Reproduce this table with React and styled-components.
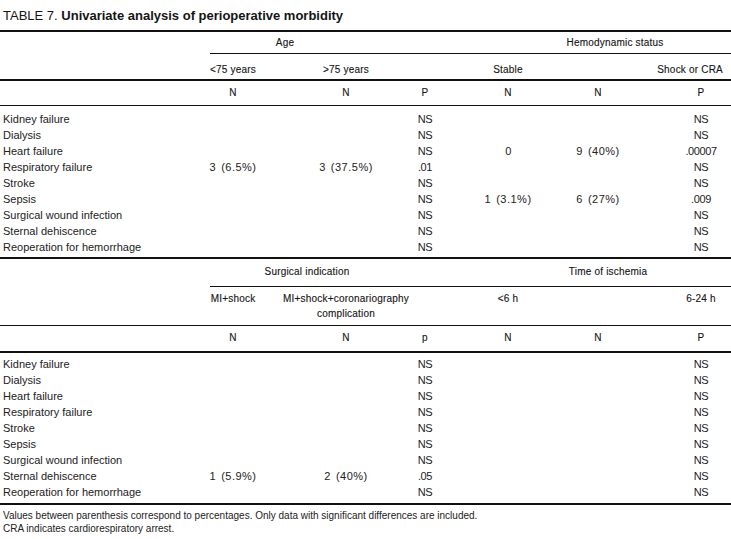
import React from "react";
import styled, { createGlobalStyle } from "styled-components";

const COLS = "133px 200px 26px 132px 34px 146px 60px";

const GlobalStyle = createGlobalStyle`
  html, body {
    margin: 0;
    padding: 0;
    background: #fff;
  }
  body {
    font-family: "Liberation Sans", Arial, sans-serif;
    color: #151515;
  }
`;

const Page = styled.div`
  width: 731px;
`;

const Title = styled.h1`
  margin: 0 0 6px;
  padding: 8px 3px 0;
  font-size: 13px;
  line-height: 16px;
  font-weight: normal;
  white-space: nowrap;
  b {
    font-weight: bold;
  }
`;

const GroupRow = styled.div`
  display: flex;
  padding-left: 210px;
  border-top: ${(p) => (p.$top ? "2px solid #111" : "none")};
`;

const GroupBand = styled.div`
  flex: 1;
  display: grid;
  grid-template-columns: ${(p) => p.$cols};
  padding: ${(p) => p.$pad};
  border-bottom: 1px solid #111;
  font-size: 10px;
  line-height: 12px;
  -webkit-text-stroke: 0.12px currentColor;
  letter-spacing: 0.2px;
`;

const GroupLabel = styled.div`
  grid-column: ${(p) => p.$col};
  text-align: center;
  white-space: nowrap;
`;

const HeadRow = styled.div`
  display: grid;
  grid-template-columns: ${COLS};
  padding: ${(p) => p.$pad};
  border-bottom: ${(p) => p.$line}px solid #111;
  font-size: 10px;
  line-height: ${(p) => p.$lh || 12}px;
  -webkit-text-stroke: 0.12px currentColor;
  letter-spacing: 0.2px;
`;

const Body = styled.div`
  display: grid;
  grid-template-columns: ${COLS};
  grid-auto-rows: 16px;
  padding: ${(p) => p.$pad};
  border-bottom: 2px solid #111;
  font-size: 11px;
  line-height: 16px;
  color: #222;
`;

const Cell = styled.div`
  display: flex;
  justify-content: ${(p) =>
    p.$align === "left" ? "flex-start" : p.$align === "right" ? "flex-end" : "center"};
  padding-left: ${(p) => (p.$align === "left" ? "3px" : "0")};
  padding-right: ${(p) => p.$pr || 0}px;
  white-space: nowrap;
  text-align: center;
`;

const Value = styled.span`
  letter-spacing: ${(p) => (p.$wide ? "0.5px" : "-0.4px")};
  word-spacing: ${(p) => (p.$wide ? "1.5px" : "0")};
`;

const Notes = styled.div`
  padding: 4px 3px 0;
  font-size: 10px;
  line-height: 13px;
  color: #222;
`;

const table1 = [
  ["Kidney failure", "", "", "NS", "", "", "NS"],
  ["Dialysis", "", "", "NS", "", "", "NS"],
  ["Heart failure", "", "", "NS", "0", "9 (40%)", ".00007"],
  ["Respiratory failure", "3 (6.5%)", "3 (37.5%)", ".01", "", "", "NS"],
  ["Stroke", "", "", "NS", "", "", "NS"],
  ["Sepsis", "", "", "NS", "1 (3.1%)", "6 (27%)", ".009"],
  ["Surgical wound infection", "", "", "NS", "", "", "NS"],
  ["Sternal dehiscence", "", "", "NS", "", "", "NS"],
  ["Reoperation for hemorrhage", "", "", "NS", "", "", "NS"],
];

const table2 = [
  ["Kidney failure", "", "", "NS", "", "", "NS"],
  ["Dialysis", "", "", "NS", "", "", "NS"],
  ["Heart failure", "", "", "NS", "", "", "NS"],
  ["Respiratory failure", "", "", "NS", "", "", "NS"],
  ["Stroke", "", "", "NS", "", "", "NS"],
  ["Sepsis", "", "", "NS", "", "", "NS"],
  ["Surgical wound infection", "", "", "NS", "", "", "NS"],
  ["Sternal dehiscence", "1 (5.9%)", "2 (40%)", ".05", "", "", "NS"],
  ["Reoperation for hemorrhage", "", "", "NS", "", "", "NS"],
];

const BodyRows = ({ rows, pad }) => (
  <Body $pad={pad}>
    {rows.map((row, i) =>
      row.map((v, j) => (
        <Cell key={`${i}-${j}`} $align={j === 0 ? "left" : "center"}>
          {j === 0 ? v : <Value $wide={v.includes("(")}>{v}</Value>}
        </Cell>
      ))
    )}
  </Body>
);

const NRow = ({ p, pad, line }) => (
  <HeadRow $pad={pad} $line={line}>
    <Cell />
    <Cell>N</Cell>
    <Cell>N</Cell>
    <Cell>{p}</Cell>
    <Cell>N</Cell>
    <Cell>N</Cell>
    <Cell>P</Cell>
  </HeadRow>
);

export default function App() {
  return (
    <Page>
      <GlobalStyle />
      <Title>
        TABLE 7. <b>Univariate analysis of perioperative morbidity</b>
      </Title>

      <GroupRow $top>
        <GroupBand $cols="150px 139px 1fr" $pad="5px 0 4px">
          <GroupLabel $col={1}>Age</GroupLabel>
          <GroupLabel $col={3}>Hemodynamic status</GroupLabel>
        </GroupBand>
      </GroupRow>
      <HeadRow $pad="10px 0 3px" $line={2}>
        <Cell />
        <Cell>&lt;75 years</Cell>
        <Cell>&gt;75 years</Cell>
        <Cell />
        <Cell>Stable</Cell>
        <Cell />
        <Cell $align="right" $pr={8}>
          Shock or CRA
        </Cell>
      </HeadRow>
      <NRow p="P" pad="6px 0 6px" line={1} />
      <BodyRows rows={table1} pad="5px 0 2px" />

      <GroupRow>
        <GroupBand $cols="194px 81px 1fr" $pad="7px 0 8px">
          <GroupLabel $col={1}>Surgical indication</GroupLabel>
          <GroupLabel $col={3}>Time of ischemia</GroupLabel>
        </GroupBand>
      </GroupRow>
      <HeadRow $pad="4px 0 4px" $line={1} $lh={15}>
        <Cell />
        <Cell>MI+shock</Cell>
        <Cell>
          <span>
            MI+shock+coronariography
            <br />
            complication
          </span>
        </Cell>
        <Cell />
        <Cell>&lt;6 h</Cell>
        <Cell />
        <Cell>6-24 h</Cell>
      </HeadRow>
      <NRow p="p" pad="6px 0 7px" line={2} />
      <BodyRows rows={table2} pad="3px 0 3px" />

      <Notes>
        Values between parenthesis correspond to percentages. Only data with
        significant differences are included.
        <br />
        CRA indicates cardiorespiratory arrest.
      </Notes>
    </Page>
  );
}
